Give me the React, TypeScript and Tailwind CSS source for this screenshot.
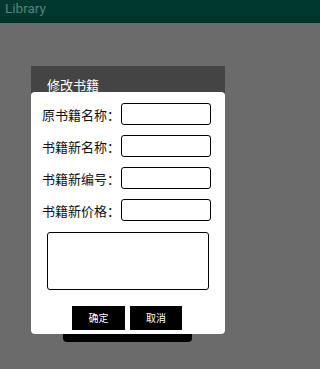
import React from "react";

const cjk = { fontFamily: '"Noto Sans CJK SC", "Noto Sans", sans-serif' };

function Row({ label }: { label: string }) {
  return (
    <div className="flex items-center h-[22px]">
      <div className="w-[79px] text-[13px] leading-none text-[#111111] whitespace-nowrap" style={cjk}>
        {label}
      </div>
      <div className="w-[90px] h-[22px] border border-black rounded-[3px] bg-white" />
    </div>
  );
}

export default function App() {
  return (
    <div className="w-full min-w-[255px] h-[369px] bg-[#6b6b6b] overflow-hidden flex flex-col">
      <div className="h-[23px] bg-[#00382f] flex flex-col shrink-0">
        <div className="h-[17px] flex items-center pl-[5px]">
          <span className="text-[13.5px] leading-none text-[#55827a] mt-[1px]" style={{ fontFamily: 'Roboto, "Noto Sans", sans-serif' }}>
            Library
          </span>
        </div>
        <div className="h-[6px] bg-[#00342b]" />
      </div>
      <div className="ml-[31px] mt-[43px] w-[194px] flex flex-col">
        <div className="h-[27px] bg-[#444444] flex items-end pl-[16px] pb-[1px]">
          <span className="text-[13px] leading-none text-white mb-[1px]" style={cjk}>
            修改书籍
          </span>
        </div>
        <div className="bg-white rounded-[4px] -mt-[1px] h-[242px] flex flex-col pl-[11px] pt-[11px]">
          <div className="flex flex-col gap-[10px]">
            <Row label="原书籍名称：" />
            <Row label="书籍新名称：" />
            <Row label="书籍新编号：" />
            <Row label="书籍新价格：" />
          </div>
          <div className="ml-[5px] mt-[11px] w-[162px] h-[58px] border border-black rounded-[3px]" />
          <div className="mt-[16px] flex gap-[5px] ml-[30px]">
            <div className="w-[53px] h-[24px] bg-black flex items-center justify-center">
              <span className="text-[10px] leading-none text-white" style={cjk}>确定</span>
            </div>
            <div className="w-[52px] h-[24px] bg-black flex items-center justify-center">
              <span className="text-[10px] leading-none text-white" style={cjk}>取消</span>
            </div>
          </div>
        </div>
        <div className="ml-[32px] w-[129px] h-[8px] bg-black rounded-b-[4px]" />
      </div>
    </div>
  );
}
